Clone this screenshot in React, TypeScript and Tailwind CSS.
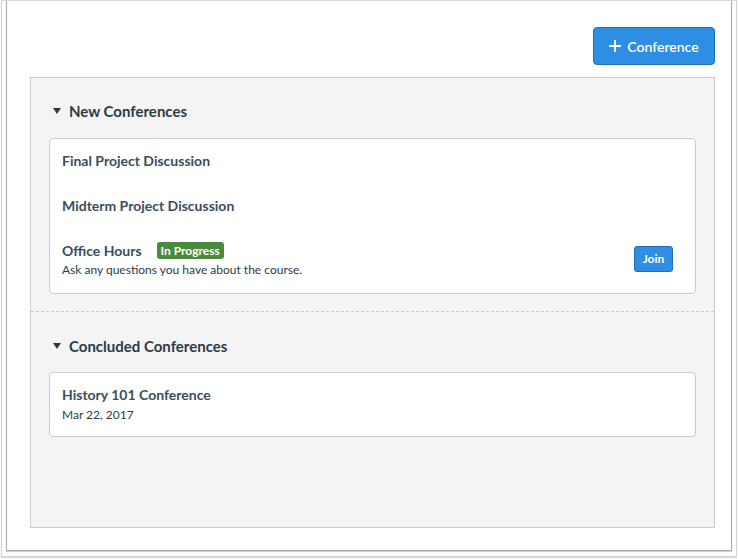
import React from "react";

const font = { fontFamily: "Lato, 'Noto Sans', sans-serif" };

function Caret() {
  return (
    <svg width="8" height="6" viewBox="0 0 8 6" className="mr-[8px]">
      <path d="M0 0 L8 0 L4 6 Z" fill="#2d3b45" />
    </svg>
  );
}

function Header({ title }: { title: string }) {
  return (
    <div className="flex items-center h-[20px] pl-[4px]">
      <Caret />
      <span className="text-[15px] font-bold text-[#2d3b45] leading-[20px]">{title}</span>
    </div>
  );
}

export default function App() {
  return (
    <div className="w-[738px] h-[559px] bg-white" style={font}>
      <div className="ml-[1px] w-[736px] h-[557px] border border-[#d4d4d4] px-[4px] pb-[5px] shadow-[0_1px_1px_rgba(0,0,0,0.15)]">
        <div className="h-[550px] border-x border-b border-[#a9a9a9] pl-[23px] pr-[16px] pt-[26px] flex flex-col shadow-[0_1px_1px_rgba(0,0,0,0.2)]">
          <div className="flex justify-end">
            <button className="h-[38px] w-[122px] rounded-[4px] bg-[#2e8ee3] border border-[#1f6fb6] text-white text-[14px] font-semibold flex items-center justify-center gap-[6px]">
              <svg width="12" height="12" viewBox="0 0 12 12">
                <path d="M6 0 V12 M0 6 H12" stroke="white" strokeWidth="1.8" />
              </svg>
              <span>Conference</span>
            </button>
          </div>
          <div className="mt-[12px] h-[451px] bg-[#f4f4f4] border border-[#c7cdd1]">
            <div className="px-[18px] pt-[23px] pb-[17px] border-b border-dashed border-[#c7cdd1]">
              <Header title="New Conferences" />
              <div className="mt-[17px] bg-white border border-[#c7cdd1] rounded-[4px]">
                <div className="px-[12px] pt-[11px] pb-[13px]">
                  <div className="text-[14px] font-bold text-[#3b4d5a] leading-[21px]">Final Project Discussion</div>
                </div>
                <div className="px-[12px] pt-[11px] pb-[13px]">
                  <div className="text-[14px] font-bold text-[#3b4d5a] leading-[21px]">Midterm Project Discussion</div>
                </div>
                <div className="pl-[12px] pr-[22px] pt-[11px] pb-[15px] flex items-center">
                  <div className="flex-1">
                    <div className="flex items-center leading-[21px]">
                      <span className="text-[14px] font-bold text-[#3b4d5a]">Office Hours</span>
                      <span className="ml-[15px] h-[17px] px-[4px] rounded-[3px] bg-[#4a8a3d] text-white text-[12px] font-bold leading-[17px]">In Progress</span>
                    </div>
                    <div className="text-[12px] text-[#2d3b45] leading-[17px]">Ask any questions you have about the course.</div>
                  </div>
                  <button className="h-[26px] w-[39px] rounded-[3px] bg-[#2e8ee3] border border-[#1f6fb6] text-white text-[12px] font-bold">Join</button>
                </div>
              </div>
            </div>
            <div className="px-[18px] pt-[24px]">
              <Header title="Concluded Conferences" />
              <div className="mt-[16px] bg-white border border-[#c7cdd1] rounded-[4px] px-[12px] pt-[12px] pb-[13px]">
                <div className="text-[14px] font-bold text-[#3b4d5a] leading-[20px]">History 101 Conference</div>
                <div className="mt-[1px] text-[12px] text-[#2d3b45] leading-[17px]">Mar 22, 2017</div>
              </div>
            </div>
          </div>
        </div>
      </div>
    </div>
  );
}
